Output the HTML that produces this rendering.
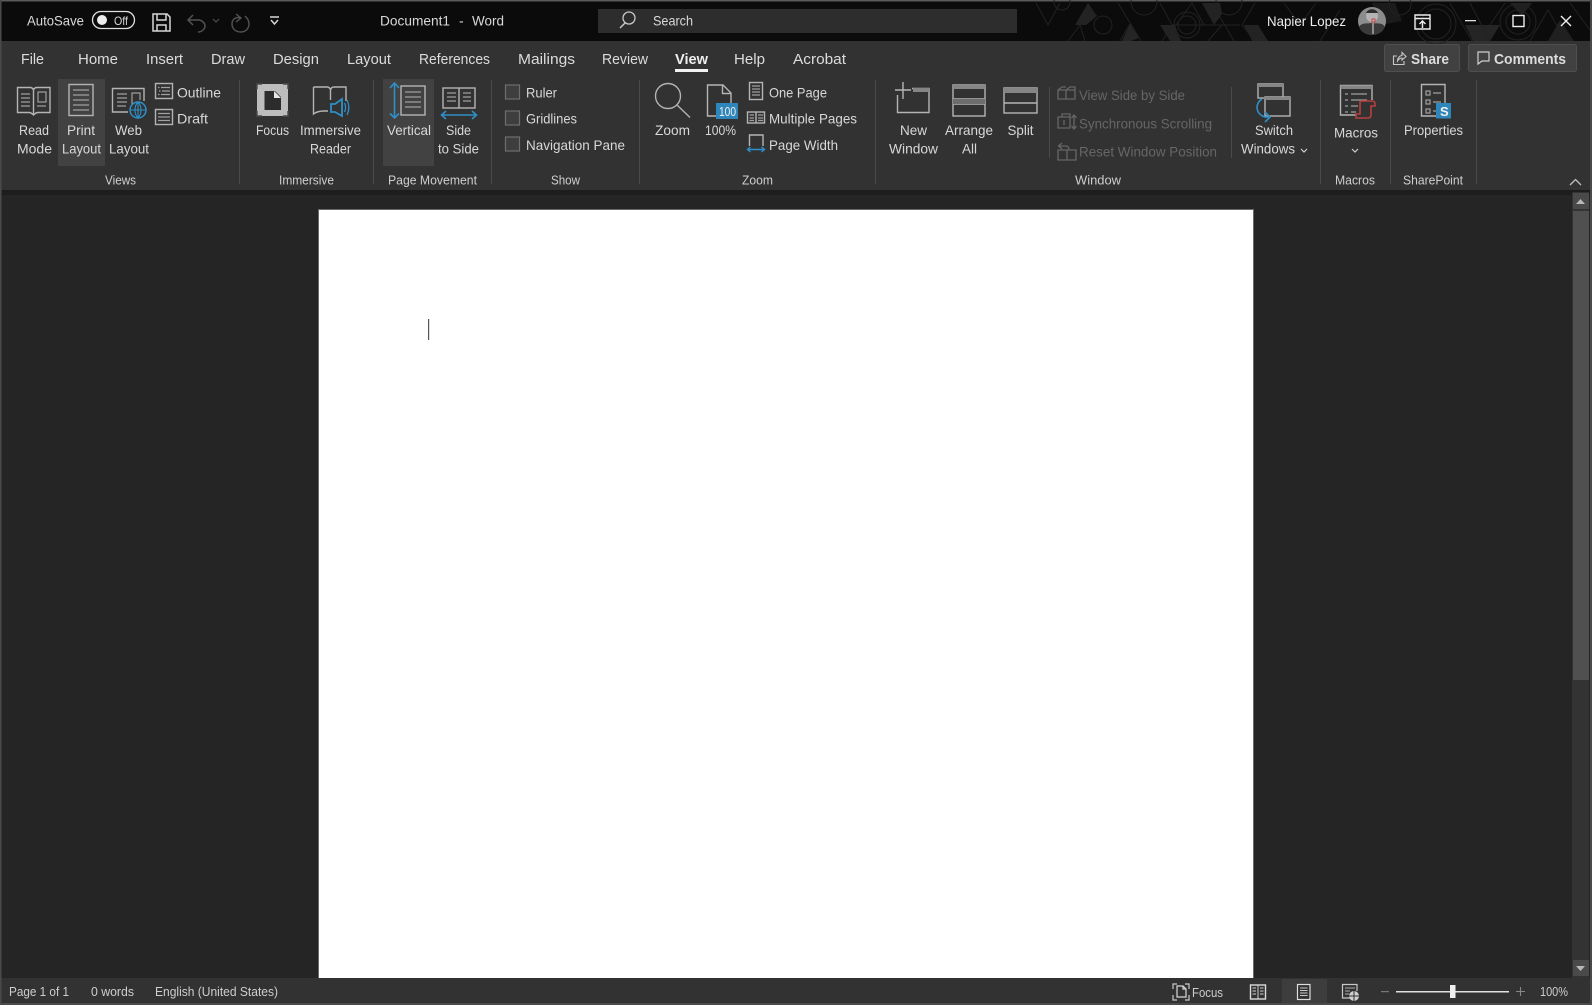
<!DOCTYPE html>
<html><head><meta charset="utf-8"><title>Document1 - Word</title>
<style>
html,body{margin:0;padding:0;background:#252525;overflow:hidden}
svg{display:block}
text{font-family:"Liberation Sans",sans-serif;fill:#d8d8d8;font-size:14px}
.g{font-size:13px;fill:#cecece}
.t{font-size:15px;fill:#dcdcdc}
.d{fill:#666;font-size:14px}
.i{fill:none;stroke:#b4b4b4;stroke-width:1.4}
.l{fill:none;stroke:#a0a0a0;stroke-width:1.2}
.b{fill:none;stroke:#2f8fc7;stroke-width:1.6}
.m{fill:none;stroke:#666;stroke-width:1.3}
.p{fill:none;stroke:#222;stroke-width:1}
</style></head><body>
<svg width="1592" height="1005" viewBox="0 0 1592 1005" xmlns="http://www.w3.org/2000/svg">
<!-- backgrounds -->
<rect width="1592" height="1005" fill="#252525"/>
<rect width="1592" height="41" fill="#0b0b0b"/>
<rect y="0" width="1592" height="1.5" fill="#5a5a5a"/>
<rect y="41" width="1592" height="149" fill="#323232"/>
<rect y="190" width="1592" height="5" fill="#1d1d1d"/>
<rect y="978" width="1592" height="27" fill="#323232"/>
<rect y="1003" width="1592" height="2" fill="#4a4a4a"/>
<rect x="0" y="0" width="1.5" height="1005" fill="#4a4a4a"/>
<rect x="1590" y="0" width="2" height="1005" fill="#4a4a4a"/>
<!-- page -->
<rect x="318" y="209" width="936" height="769" fill="#6a6a6a"/>
<rect x="319" y="210" width="934" height="768" fill="#fff"/>
<rect x="428" y="319" width="1.2" height="21" fill="#555"/>

<!-- title pattern -->
<g>
<polygon points="1088,3 1097,16 1086,25 1075,25" fill="#232323"/>
<polygon points="1130,24 1139,38 1131,41 1122,41" fill="#252525"/>
<polygon points="1160,25 1175,25 1181,41 1170,41" fill="#232323"/>
<polygon points="1202,3 1220,3 1222,14 1214,25" fill="#232323"/>
<polygon points="1244,25 1258,25 1268,41 1252,41" fill="#232323"/>
<polygon points="1372,3 1395,3 1402,21 1380,25" fill="#1b1b1b"/>
<polygon points="1465,25 1500,25 1490,41 1473,41" fill="#252525"/>
<polygon points="1510,3 1532,3 1522,16" fill="#202020"/>
<polygon points="1548,41 1560,20 1574,41" fill="#202020"/>
<circle cx="1103" cy="25" r="9" class="p"/>
<circle cx="1187" cy="25" r="9" class="p"/>
<circle cx="1187" cy="25" r="13" class="p"/>
<circle cx="1062" cy="2" r="8" class="p"/>
<circle cx="1144" cy="2" r="13" class="p"/>
<circle cx="1229" cy="2" r="13" class="p"/>
<circle cx="1436" cy="24" r="15" class="p"/>
<circle cx="1436" cy="24" r="20" class="p"/>
<circle cx="1518" cy="22" r="12" class="p"/>
<circle cx="1518" cy="22" r="18" class="p"/>
<circle cx="1400" cy="4" r="11" class="p"/>
<path class="p" d="M1036 3L1048 25L1060 3M1068 41L1080 25L1085 41M1118 3L1141 41M1130 24L1120 41M1160 3L1172 25H1240M1172 25L1162 41M1176 25L1192 3L1204 25M1212 3L1234 41M1222 25L1208 41M1255 3L1242 25L1255 41M1284 3L1300 25L1316 3M1320 41L1340 10M1450 3L1472 41M1470 3L1490 41M1490 25L1505 3M1530 41L1548 10L1566 41M1570 3L1590 30"/>
</g>

<!-- title bar -->
<text x="27" y="25.500" textLength="57" lengthAdjust="spacingAndGlyphs">AutoSave</text>
<rect x="92.500" y="11.500" width="42" height="17" rx="8.500" fill="none" stroke="#e0e0e0" stroke-width="1.300"/>
<circle cx="102" cy="20" r="5" fill="#eee"/>
<text x="114" y="25" textLength="14" lengthAdjust="spacingAndGlyphs" style="font-size:12px">Off</text>
<path d="M153 14H167L170 17V31H153ZM157 14V20H166V14M157 31V25H166V31" fill="none" stroke="#d8d8d8" stroke-width="1.500"/>
<path d="M193 15L188 20L193 25M188 20H198C203 20 205 24 205 26C205 29 202 32 198 32" fill="none" stroke="#525252" stroke-width="1.500"/>
<path d="M213 19L216 22L219 19" fill="none" stroke="#555" stroke-width="1"/>
<path d="M236 14L241 18L236 22M241 18C234 16 232 21 232 24C232 29 236 32 241 32C246 32 249 28 249 24C249 20 247 18 245 16" fill="none" stroke="#525252" stroke-width="1.400"/>
<path d="M270 17H279M271 20L274.500 24L278 20" fill="none" stroke="#d8d8d8" stroke-width="1.400"/>
<text x="380" y="25.500" textLength="70" lengthAdjust="spacingAndGlyphs">Document1</text>
<text x="459" y="25.500">-</text>
<text x="472" y="25.500" textLength="32" lengthAdjust="spacingAndGlyphs">Word</text>
<rect x="598" y="9" width="419" height="24" fill="#2d2d2d"/>
<circle cx="629" cy="18" r="6" fill="none" stroke="#c8c8c8" stroke-width="1.300"/>
<path d="M625 23L620 28" stroke="#c8c8c8" stroke-width="1.500"/>
<text x="653" y="25.500" textLength="40" lengthAdjust="spacingAndGlyphs">Search</text>
<text x="1267" y="26" textLength="79" lengthAdjust="spacingAndGlyphs" style="fill:#eee">Napier Lopez</text>
<circle cx="1372" cy="21" r="14" fill="#8c8c8c"/>
<path d="M1359 27C1362 22 1368 24 1372 23C1377 24 1382 22 1385 27C1383 32 1378 35 1372 35C1366 35 1361 32 1359 27Z" fill="#3a3a3a"/>
<circle cx="1372" cy="16" r="6" fill="#b4b4b4"/>
<path d="M1366 13C1368 8 1376 8 1378 13Z" fill="#2e2e2e"/>
<path d="M1373 23V34" stroke="#ddd"/>
<rect x="1372" y="19" width="3" height="3" fill="none" stroke="#c44" stroke-width="1"/>
<path d="M1415 15H1430V29H1415ZM1415 18.500H1430M1422.500 28V21M1419.500 24L1422.500 21L1425.500 24" fill="none" stroke="#eee" stroke-width="1.400"/>
<rect x="1465" y="20" width="11" height="1.300" fill="#ddd"/>
<rect x="1513" y="15.500" width="11" height="11" fill="none" stroke="#eee" stroke-width="1.400"/>
<path d="M1561 16L1571 26M1571 16L1561 26" stroke="#eee" stroke-width="1.400"/>

<!-- tabs -->
<g class="tabs">
<text class="t" x="21" y="64" textLength="23" lengthAdjust="spacingAndGlyphs">File</text>
<text class="t" x="78" y="64" textLength="40" lengthAdjust="spacingAndGlyphs">Home</text>
<text class="t" x="146" y="64" textLength="37" lengthAdjust="spacingAndGlyphs">Insert</text>
<text class="t" x="211" y="64" textLength="34" lengthAdjust="spacingAndGlyphs">Draw</text>
<text class="t" x="273" y="64" textLength="46" lengthAdjust="spacingAndGlyphs">Design</text>
<text class="t" x="347" y="64" textLength="44" lengthAdjust="spacingAndGlyphs">Layout</text>
<text class="t" x="419" y="64" textLength="71" lengthAdjust="spacingAndGlyphs">References</text>
<text class="t" x="518" y="64" textLength="57" lengthAdjust="spacingAndGlyphs">Mailings</text>
<text class="t" x="602" y="64" textLength="46" lengthAdjust="spacingAndGlyphs">Review</text>
<text class="t" x="675" y="64" textLength="33" lengthAdjust="spacingAndGlyphs" style="font-weight:bold;fill:#eee">View</text>
<rect x="675" y="69" width="33" height="3" fill="#f2f2f2"/>
<text class="t" x="734" y="64" textLength="31" lengthAdjust="spacingAndGlyphs">Help</text>
<text class="t" x="793" y="64" textLength="53" lengthAdjust="spacingAndGlyphs">Acrobat</text>
</g>
<!-- share/comments -->
<rect x="1384.500" y="44.500" width="75" height="27" rx="2" fill="#414141" stroke="#4f4f4f"/>
<rect x="1468.500" y="44.500" width="108" height="27" rx="2" fill="#414141" stroke="#4f4f4f"/>
<path d="M1397 56H1393.500V64.500H1404V61M1397.500 61C1397.500 58 1400 55.500 1402 55.500V52.500L1406 56.500L1402 60V58C1400 58 1398.500 59.500 1397.500 61Z" fill="none" stroke="#c8c8c8" stroke-width="1.100"/>
<text x="1411" y="64" textLength="38" lengthAdjust="spacingAndGlyphs" style="font-size:15px;font-weight:bold;fill:#dcdcdc">Share</text>
<path d="M1478 52H1489V61H1482L1478 64V61H1478Z" fill="none" stroke="#d0d0d0" stroke-width="1.200"/>
<text x="1494" y="64" textLength="72" lengthAdjust="spacingAndGlyphs" style="font-size:15px;font-weight:bold;fill:#dcdcdc">Comments</text>

<!-- highlights -->
<rect x="58" y="79" width="47" height="87" fill="#424242"/>
<rect x="383" y="79" width="51" height="87" fill="#424242"/>

<!-- separators -->
<g fill="#4a4a4a">
<rect x="239" y="80" width="1" height="104"/><rect x="373" y="80" width="1" height="104"/><rect x="491" y="80" width="1" height="104"/><rect x="639" y="80" width="1" height="104"/><rect x="875" y="80" width="1" height="104"/>
<rect x="1049" y="87" width="1" height="71"/><rect x="1231" y="87" width="1" height="71"/>
<rect x="1320" y="80" width="1" height="104"/><rect x="1390" y="80" width="1" height="104"/><rect x="1476" y="80" width="1" height="104"/>
</g>

<!-- Views -->
<path class="i" d="M17.500 87.500H30C31.500 87.500 33 88.500 33.500 90C34 88.500 35.500 87.500 37 87.500H50V112.500H38C36 112.500 35 113.500 33.500 115C32 113.500 31 112.500 29 112.500H17.500ZM33.500 90V114"/>
<path class="l" d="M21 94H30M21 98H30M21 102H30M21 106H30"/>
<rect class="l" x="38" y="92" width="8" height="10"/><path class="l" d="M37 106H46"/>
<text x="19" y="135" textLength="30" lengthAdjust="spacingAndGlyphs">Read</text>
<text x="17" y="153.500" textLength="35" lengthAdjust="spacingAndGlyphs">Mode</text>
<rect class="i" x="69" y="84.500" width="24" height="31"/>
<path class="l" d="M73 90H89M73 95H89M73 100H89M73 105H89M73 110H89"/>
<text x="67" y="135" textLength="28" lengthAdjust="spacingAndGlyphs">Print</text>
<text x="62" y="153.500" textLength="39" lengthAdjust="spacingAndGlyphs">Layout</text>
<path class="i" d="M128 112H112.500V88.500H144V101"/>
<path class="l" d="M117 94H127M117 98H127M117 102H127M117 106H126"/>
<path class="l" d="M132 104V93H140V100"/>
<circle cx="138" cy="110" r="8" fill="#323232" stroke="#2f8fc7" stroke-width="1.500"/>
<path class="b" d="M130 110H146M138 102V118M138 102C134 106 134 114 138 118M138 102C142 106 142 114 138 118" style="stroke-width:1.100"/>
<text x="115" y="135" textLength="27" lengthAdjust="spacingAndGlyphs">Web</text>
<text x="109" y="153.500" textLength="40" lengthAdjust="spacingAndGlyphs">Layout</text>
<rect class="i" x="155.500" y="83.500" width="17" height="15"/>
<path class="l" d="M158 87.500H159.500M161 87.500H170M159 91H160.500M162 91H170M158 94.500H159.500M161 94.500H170"/>
<text x="177" y="97.500" textLength="44" lengthAdjust="spacingAndGlyphs">Outline</text>
<rect class="i" x="155.500" y="109.500" width="17" height="15"/>
<path class="l" d="M158 113.500H170M158 117H170M158 120.500H170"/>
<text x="177" y="123.500" textLength="31" lengthAdjust="spacingAndGlyphs">Draft</text>
<text class="g" x="105" y="184.500" textLength="31" lengthAdjust="spacingAndGlyphs">Views</text>

<!-- Immersive -->
<rect x="257" y="84" width="31" height="32" fill="#bdbdbd"/>
<path d="M257 89V84H262M283 84H288V89M288 111V116H283M262 116H257V111" fill="none" stroke="#4c4c4c" stroke-width="1.400"/>
<path d="M264.500 91V110H281V97L275 91Z" fill="#2c2c2c"/>
<path d="M274 91V98H281Z" fill="#e8e8e8"/>
<path class="i" d="M313.500 87H327C329 87 330 88 330.500 90C331 88 332 87 334 87H346V101M330.500 90V100M328 111H324C319 111 316 112 313.500 114V87"/>
<path class="b" d="M331 104H335L342 99V116L335 112H331Z" style="stroke-width:1.800"/>
<path class="b" d="M344.500 103C346 106 346 109 344.500 112M347 100C349.500 105 349.500 110 347 115" style="stroke-width:1.300"/>
<text x="256" y="135" textLength="33" lengthAdjust="spacingAndGlyphs">Focus</text>
<text x="300" y="135" textLength="61" lengthAdjust="spacingAndGlyphs">Immersive</text>
<text x="310" y="153.500" textLength="41" lengthAdjust="spacingAndGlyphs">Reader</text>
<text class="g" x="279" y="184.500" textLength="55" lengthAdjust="spacingAndGlyphs">Immersive</text>

<!-- Page movement -->
<path class="b" d="M394.500 83V118M390 88L394.500 83L399 88M390 113.500L394.500 118L399 113.500"/>
<rect class="i" x="401" y="86" width="24" height="29"/>
<path class="l" d="M405 92H421M405 97H421M405 102H421M405 107H421"/>
<text x="387" y="135" textLength="44" lengthAdjust="spacingAndGlyphs">Vertical</text>
<rect class="i" x="443" y="88" width="32" height="20"/><path class="i" d="M459 88V108"/>
<path class="l" d="M447 93H456M447 97H456M447 101H456M463 93H471M463 97H471M463 101H471"/>
<path class="b" d="M441.500 115H476.500M446 111L441.500 115L446 119M472 111L476.500 115L472 119"/>
<text x="446" y="135" textLength="25" lengthAdjust="spacingAndGlyphs">Side</text>
<text x="438" y="153.500" textLength="41" lengthAdjust="spacingAndGlyphs">to Side</text>
<text class="g" x="388" y="184.500" textLength="89" lengthAdjust="spacingAndGlyphs">Page Movement</text>

<!-- Show -->
<g fill="#3e3e3e" stroke="#6e6e6e" stroke-width="1.200">
<rect x="505.500" y="85" width="14" height="14"/><rect x="505.500" y="111" width="14" height="14"/><rect x="505.500" y="137" width="14" height="14"/>
</g>
<text x="526" y="97.500" textLength="31" lengthAdjust="spacingAndGlyphs">Ruler</text>
<text x="526" y="123.500" textLength="51" lengthAdjust="spacingAndGlyphs">Gridlines</text>
<text x="526" y="150" textLength="99" lengthAdjust="spacingAndGlyphs">Navigation Pane</text>
<text class="g" x="551" y="184.500" textLength="29" lengthAdjust="spacingAndGlyphs">Show</text>

<!-- Zoom -->
<circle class="i" cx="668" cy="96" r="12.500"/>
<path class="i" d="M677 105L690 117.500"/>
<text x="655" y="135" textLength="35" lengthAdjust="spacingAndGlyphs">Zoom</text>
<path class="i" d="M731 103V93L723 85H707.500V116H716"/>
<path class="i" d="M722.500 85V93.500H731"/>
<rect x="716" y="103" width="22" height="16" fill="#2f86bb"/>
<text x="719" y="116" textLength="17" lengthAdjust="spacingAndGlyphs" style="font-size:13px;fill:#f0f0f0">100</text>
<text x="705" y="135" textLength="31" lengthAdjust="spacingAndGlyphs">100%</text>
<rect class="i" x="749.500" y="82.500" width="13" height="17"/>
<path class="l" d="M752 86H760M752 89H760M752 92H760M752 95H760"/>
<text x="769" y="97.500" textLength="58" lengthAdjust="spacingAndGlyphs">One Page</text>
<rect class="i" x="747.500" y="112" width="17" height="11"/><path class="i" d="M756 112V123"/>
<path class="l" d="M749.500 115H754M749.500 118H754M749.500 120.500H754M758 115H763M758 118H763M758 120.500H763"/>
<text x="769" y="123.500" textLength="88" lengthAdjust="spacingAndGlyphs">Multiple Pages</text>
<path class="i" d="M749.500 146V135H763V146"/>
<path class="b" d="M747.500 149.500H764.500M750.500 147L747.500 149.500L750.500 152M761.500 147L764.500 149.500L761.500 152" style="stroke-width:1.400"/>
<text x="769" y="150" textLength="69" lengthAdjust="spacingAndGlyphs">Page Width</text>
<text class="g" x="742" y="184.500" textLength="31" lengthAdjust="spacingAndGlyphs">Zoom</text>

<!-- Window -->
<path class="i" d="M897.500 95V112.500H929V88.500H912"/>
<rect x="913" y="88" width="16" height="4" fill="#858585"/>
<path class="i" d="M903 82V99M895 90H911"/>
<text x="900" y="135" textLength="27" lengthAdjust="spacingAndGlyphs">New</text>
<text x="889" y="153.500" textLength="49" lengthAdjust="spacingAndGlyphs">Window</text>
<rect class="i" x="953" y="85" width="32" height="31"/>
<rect x="953" y="85" width="32" height="4" fill="#858585"/>
<path class="i" d="M953 99H985M953 104H985"/>
<rect x="953" y="99" width="32" height="5" fill="#6e6e6e"/>
<text x="945" y="135" textLength="48" lengthAdjust="spacingAndGlyphs">Arrange</text>
<text x="962" y="153.500" textLength="15" lengthAdjust="spacingAndGlyphs">All</text>
<rect class="i" x="1004" y="88" width="33" height="25"/>
<rect x="1004" y="88" width="33" height="5" fill="#858585"/>
<path class="i" d="M1004 103H1037"/>
<text x="1007.500" y="135" textLength="26" lengthAdjust="spacingAndGlyphs">Split</text>

<path class="m" d="M1058 90H1066V99H1058ZM1066 90H1075V99H1066ZM1058 90L1062 87H1066M1066 90L1070 87H1075V90"/>
<text class="d" x="1079" y="100" textLength="106" lengthAdjust="spacingAndGlyphs">View Side by Side</text>
<path class="m" d="M1058 117H1070V128H1058ZM1062 117V114H1070V117M1064 120V125M1074 115V129M1071.500 118L1074 115L1076.500 118M1071.500 126L1074 129L1076.500 126"/>
<text class="d" x="1079" y="128.500" textLength="133" lengthAdjust="spacingAndGlyphs">Synchronous Scrolling</text>
<path class="m" d="M1058 150H1067V160H1058ZM1067 150H1076V160H1067ZM1059 146H1066C1068 146 1069 148 1069 150M1062 143L1058.500 146L1062 149"/>
<text class="d" x="1079" y="156.500" textLength="138" lengthAdjust="spacingAndGlyphs">Reset Window Position</text>

<rect class="i" x="1258" y="84" width="25" height="14"/><rect x="1258" y="84" width="25" height="3" fill="#858585"/>
<rect x="1264" y="97" width="27" height="20" fill="#323232"/>
<rect class="i" x="1265" y="97" width="25" height="19"/><rect x="1265" y="97" width="25" height="3" fill="#858585"/>
<path class="b" d="M1262 99C1255 103 1255 114 1265 117H1270M1265 112L1270 117L1265 122"/>
<text x="1255" y="135" textLength="38" lengthAdjust="spacingAndGlyphs">Switch</text>
<text x="1241" y="153.500" textLength="54" lengthAdjust="spacingAndGlyphs">Windows</text>
<path d="M1301 149L1304 152L1307 149" fill="none" stroke="#d0d0d0" stroke-width="1.200"/>
<text class="g" x="1075" y="184.500" textLength="46" lengthAdjust="spacingAndGlyphs">Window</text>

<!-- Macros -->
<path class="i" d="M1356 115H1340.500V85.500H1372V100"/>
<rect x="1340.500" y="85.500" width="31.500" height="3.500" fill="#858585"/>
<path class="l" d="M1345 94H1348M1351 94H1367M1345 100H1348M1351 100H1367M1345 106H1348M1351 106H1358M1345 112H1348M1351 112H1356"/>
<path d="M1361 101H1372C1374 101 1375 102 1375 104V106H1371V115C1371 117 1370 118 1368 118H1356V114H1360V102C1360 101.500 1360.500 101 1361 101Z" fill="#323232" stroke="#b8403f" stroke-width="1.600"/>
<text x="1334" y="137.500" textLength="44" lengthAdjust="spacingAndGlyphs">Macros</text>
<path d="M1352 149L1355 152L1358 149" fill="none" stroke="#d0d0d0" stroke-width="1.200"/>
<text class="g" x="1335" y="184.500" textLength="40" lengthAdjust="spacingAndGlyphs">Macros</text>

<!-- SharePoint -->
<path class="i" d="M1437 116H1421.500V84.500H1445V104"/>
<rect class="l" x="1426" y="91" width="4" height="4"/><rect class="l" x="1426" y="100" width="4" height="4"/><rect class="l" x="1426" y="109" width="4" height="4"/>
<path class="l" d="M1433 93H1441M1433 102H1441M1433 111H1436"/>
<rect x="1436" y="103" width="15" height="15.500" fill="#2f86bb"/>
<text x="1440" y="116" style="font-size:13px;font-weight:bold;fill:#f2f2f2">S</text>
<text x="1404" y="135" textLength="59" lengthAdjust="spacingAndGlyphs">Properties</text>
<text class="g" x="1403" y="184.500" textLength="60" lengthAdjust="spacingAndGlyphs">SharePoint</text>

<path d="M1570 185L1575.500 179.500L1581 185" fill="none" stroke="#c0c0c0" stroke-width="1.300"/>

<!-- scrollbar -->
<rect x="1572" y="192" width="17" height="786" fill="#333"/>
<rect x="1573" y="193" width="16" height="16" fill="#4a4a4a"/>
<path d="M1576 204H1585L1580.500 199Z" fill="#b8b8b8"/>
<rect x="1573" y="211" width="16" height="469" fill="#505050"/>
<rect x="1573" y="960" width="16" height="16" fill="#4a4a4a"/>
<path d="M1576 966H1585L1580.500 971Z" fill="#b8b8b8"/>

<!-- status bar -->
<text class="g" x="9" y="996" textLength="60" lengthAdjust="spacingAndGlyphs">Page 1 of 1</text>
<text class="g" x="91" y="996" textLength="43" lengthAdjust="spacingAndGlyphs">0 words</text>
<text class="g" x="155" y="996" textLength="123" lengthAdjust="spacingAndGlyphs">English (United States)</text>
<path d="M1173 989V984H1177M1185 984H1189V989M1189 995V1000H1185M1177 1000H1173V995" fill="none" stroke="#c8c8c8" stroke-width="1.200"/>
<path d="M1177 986H1183L1186 989V997H1177ZM1183 986V989H1186" fill="none" stroke="#d8d8d8" stroke-width="1.200"/>
<text class="g" x="1192" y="997" textLength="31" lengthAdjust="spacingAndGlyphs">Focus</text>
<rect x="1250.500" y="985" width="15" height="14" fill="none" stroke="#dcdcdc" stroke-width="1.400"/>
<path d="M1258 985V999M1252.500 988H1256M1252.500 991H1256M1252.500 994H1256M1260 988H1263.500M1260 991H1263.500M1260 994H1263.500" stroke="#d0d0d0" stroke-width="1"/>
<rect x="1282" y="979" width="45" height="24" fill="#3d3d3d"/>
<rect x="1297.500" y="984.500" width="12.500" height="15" fill="#323232" stroke="#dcdcdc" stroke-width="1.200"/>
<path d="M1300 988H1307.500M1300 990.500H1307.500M1300 993H1307.500M1300 995.500H1307.500" stroke="#c8c8c8"/>
<path d="M1350 998H1342.500V984.500H1357V991" fill="none" stroke="#c8c8c8" stroke-width="1.200"/>
<path d="M1345 988H1355M1345 991H1350M1345 994H1349" stroke="#b0b0b0"/>
<circle cx="1354" cy="996" r="5" fill="#d0d0d0"/><path d="M1349 996H1359M1354 991V1001" stroke="#323232"/>
<rect x="1381" y="991" width="8" height="1.200" fill="#777"/>
<rect x="1396" y="991" width="113" height="1.500" fill="#e0e0e0"/>
<rect x="1450" y="985" width="5.500" height="13" fill="#f0f0f0"/>
<path d="M1516 991.500H1525M1520.500 987V996" stroke="#888" stroke-width="1.100"/>
<text class="g" x="1540" y="996" textLength="28" lengthAdjust="spacingAndGlyphs">100%</text>
</svg>
</body></html>
